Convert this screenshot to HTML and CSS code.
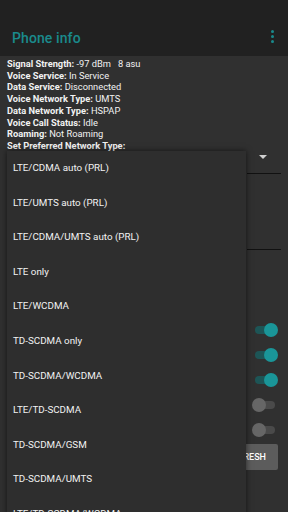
FILE: index.html
```html
<!DOCTYPE html>
<html lang="en">
<head>
    <meta charset="UTF-8">
    <meta name="viewport" content="width=device-width, initial-scale=1.0">
    <title>Phone info</title>
    <link rel="stylesheet" href="styles.css">
</head>
<body>
    <header class="toolbar">
        <h1>Phone info</h1>
        <div class="menu-dots"><span></span><span></span><span></span></div>
    </header>

    <main class="content">
        <div class="info">
            <p><b>Signal Strength:</b> -97 dBm &nbsp; 8 asu</p>
            <p><b>Voice Service:</b> In Service</p>
            <p><b>Data Service:</b> Disconnected</p>
            <p><b>Voice Network Type:</b> UMTS</p>
            <p><b>Data Network Type:</b> HSPAP</p>
            <p><b>Voice Call Status:</b> Idle</p>
            <p><b>Roaming:</b> Not Roaming</p>
            <p><b>Set Preferred Network Type:</b></p>
        </div>

        <div class="spinner">
            <span class="arrow"></span>
        </div>
        <div class="field"></div>

        <div class="switches">
            <div class="switch on"><span class="track"></span><span class="thumb"></span></div>
            <div class="switch on"><span class="track"></span><span class="thumb"></span></div>
            <div class="switch on"><span class="track"></span><span class="thumb"></span></div>
            <div class="switch"><span class="track"></span><span class="thumb"></span></div>
            <div class="switch"><span class="track"></span><span class="thumb"></span></div>
        </div>

        <div class="actions">
            <button type="button">REFRESH</button>
        </div>

        <ul class="popup">
            <li>LTE/CDMA auto (PRL)</li>
            <li>LTE/UMTS auto (PRL)</li>
            <li>LTE/CDMA/UMTS auto (PRL)</li>
            <li>LTE only</li>
            <li>LTE/WCDMA</li>
            <li>TD-SCDMA only</li>
            <li>TD-SCDMA/WCDMA</li>
            <li>LTE/TD-SCDMA</li>
            <li>TD-SCDMA/GSM</li>
            <li>TD-SCDMA/UMTS</li>
            <li>LTE/TD-SCDMA/WCDMA</li>
        </ul>
    </main>
</body>
</html>
```

FILE: styles.css
```css
body {
    margin: 0;
    width: 288px;
    height: 512px;
    overflow: hidden;
    background-color: #303030;
    font-family: Roboto, "Liberation Sans", sans-serif;
    color: #ffffff;
}
.toolbar {
    height: 56px;
    background-color: #212121;
    display: flex;
    align-items: flex-end;
    justify-content: space-between;
    padding: 0 12px 0 12px;
    box-sizing: border-box;
}
.toolbar h1 {
    margin: 0 0 10px 0;
    font-size: 14px;
    font-weight: 500;
    color: #1a8a8c;
    letter-spacing: 0.1px;
}
.menu-dots {
    display: flex;
    flex-direction: column;
    gap: 2px;
    margin: 0 2px 13px 0;
}
.menu-dots span {
    width: 3px;
    height: 3px;
    border-radius: 50%;
    background-color: #1a8a8c;
}
.content {
    position: relative;
    height: 456px;
}
.info {
    padding: 2px 7px 0;
}
.info p {
    margin: 0;
    font-size: 9.3px;
    line-height: 11.7px;
    color: #f2f2f2;
}
.info b {
    font-weight: 700;
}
.spinner {
    height: 19px;
    margin: 2px 7px 0 247px;
    border-bottom: 1px solid #111111;
    display: flex;
    justify-content: center;
}
.arrow {
    margin: 1px 0 0 -2px;
    width: 0;
    height: 0;
    border-left: 4px solid transparent;
    border-right: 4px solid transparent;
    border-top: 4px solid #d0d0d0;
}
.field {
    height: 75px;
    margin: 0 7px 0 247px;
    border-bottom: 1px solid #111111;
}
.switches {
    margin-top: 74px;
    display: flex;
    flex-direction: column;
    align-items: flex-end;
    gap: 13.2px;
    padding-right: 11px;
}
.switch {
    position: relative;
    width: 24px;
    height: 12px;
}
.switch .track {
    position: absolute;
    left: 2px;
    top: 2px;
    width: 20px;
    height: 8px;
    border-radius: 4px;
    background-color: #4a4a4a;
}
.switch .thumb {
    position: absolute;
    left: -1px;
    top: -1px;
    width: 14px;
    height: 14px;
    border-radius: 50%;
    background-color: #666666;
}
.switch.on .track {
    background-color: #1d5556;
}
.switch.on .thumb {
    left: 11px;
    background-color: #1a9598;
}
.actions {
    display: flex;
    justify-content: flex-end;
    margin-top: 8px;
    padding-right: 10px;
}
button {
    width: 88px;
    height: 26px;
    border: none;
    border-radius: 2px;
    background-color: #5c5c5c;
    color: #ffffff;
    font-family: Roboto, "Liberation Sans", sans-serif;
    font-size: 9px;
    font-weight: 500;
    text-align: right;
    padding: 0 12px 0 0;
}
.popup {
    position: absolute;
    left: 7px;
    top: 95px;
    width: 239px;
    margin: 0;
    padding: 0;
    list-style: none;
    background-color: #2e2e2e;
    box-shadow: 0 0 6px rgba(0, 0, 0, 0.6);
}
.popup li {
    height: 34.6px;
    line-height: 34.6px;
    padding-left: 6px;
    font-size: 9.8px;
    color: #f2f2f2;
}
```
